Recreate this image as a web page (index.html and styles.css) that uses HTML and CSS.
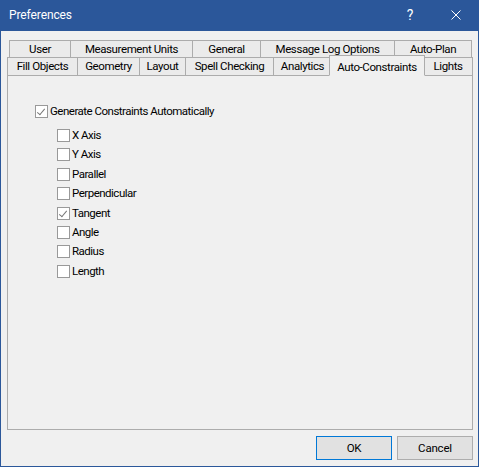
FILE: index.html
```html
<!DOCTYPE html>
<html>
<head>
<meta charset="utf-8">
<link rel="stylesheet" href="styles.css">
</head>
<body>
<div class="window">
  <div class="titlebar">
    <div class="title">Preferences</div>
    <div class="tb-btn help">?</div>
    <div class="tb-btn close">
      <svg width="10" height="10" viewBox="0 0 10 10"><path d="M0.5 0.5 L9.5 9.5 M9.5 0.5 L0.5 9.5" stroke="#fff" stroke-width="1" fill="none"/></svg>
    </div>
  </div>
  <div class="body">
    <div class="tabs">
      <div class="tabrow row1">
        <div class="tab w-user">User</div>
        <div class="tab w-meas">Measurement Units</div>
        <div class="tab w-gen">General</div>
        <div class="tab w-mlo">Message Log Options</div>
        <div class="tab w-ap">Auto-Plan</div>
      </div>
      <div class="tabrow row2">
        <div class="tab w-fill">Fill Objects</div>
        <div class="tab w-geo">Geometry</div>
        <div class="tab w-lay">Layout</div>
        <div class="tab w-spell">Spell Checking</div>
        <div class="tab w-ana">Analytics</div>
        <div class="tab w-ac selected">Auto-Constraints</div>
        <div class="tab w-lights">Lights</div>
      </div>
    </div>
    <div class="panel">
      <label class="cb main"><span class="box checked"></span><span class="lbl">Generate Constraints Automatically</span></label>
      <div class="sub">
        <label class="cb"><span class="box"></span><span class="lbl">X Axis</span></label>
        <label class="cb"><span class="box"></span><span class="lbl">Y Axis</span></label>
        <label class="cb"><span class="box"></span><span class="lbl">Parallel</span></label>
        <label class="cb"><span class="box"></span><span class="lbl">Perpendicular</span></label>
        <label class="cb"><span class="box checked"></span><span class="lbl">Tangent</span></label>
        <label class="cb"><span class="box"></span><span class="lbl">Angle</span></label>
        <label class="cb"><span class="box"></span><span class="lbl">Radius</span></label>
        <label class="cb"><span class="box"></span><span class="lbl">Length</span></label>
      </div>
    </div>
    <div class="buttons">
      <div class="btn default">OK</div>
      <div class="btn">Cancel</div>
    </div>
  </div>
</div>
</body>
</html>
```
FILE: styles.css
```css
* { box-sizing: border-box; }
html, body { margin: 0; padding: 0; }
body {
  width: 479px;
  height: 467px;
  font-family: Roboto, "Noto Sans", sans-serif;
  font-size: 11.5px;
  color: #000;
  overflow: hidden;
}
.window {
  width: 479px;
  height: 467px;
  display: flex;
  flex-direction: column;
  border: 1px solid #2B579A;
  border-top: none;
  background: #F0F0F0;
}
.titlebar {
  height: 31px;
  background: #2B579A;
  display: flex;
  align-items: center;
  color: #fff;
  margin: 0 -1px;
}
.title {
  flex: 1;
  padding-left: 9px;
  font-size: 12px;
  letter-spacing: -0.1px;
  padding-bottom: 1px;
}
.tb-btn {
  width: 46px;
  height: 31px;
  display: flex;
  align-items: center;
  justify-content: center;
}
.help { font-size: 14px; padding-bottom: 1px; }
.close svg { display: block; margin-top: -1px; }
.body {
  flex: 1;
  display: flex;
  flex-direction: column;
  padding: 9px 5px 6px 6px;
}
.tabs { display: flex; flex-direction: column; }
.tabrow { display: flex; }
.row1 { padding-left: 2px; height: 18px; margin-bottom: -1px; }
.row2 { height: 19px; margin-bottom: -1px; position: relative; z-index: 1; }
.tab {
  border: 1px solid #ACACAC;
  background: #EBEBEB;
  margin-right: -1px;
  display: flex;
  align-items: center;
  justify-content: center;
  white-space: nowrap;
  letter-spacing: -0.4px;
  padding-bottom: 1px;
}
.tab.selected {
  background: #F0F0F0;
  border-bottom-color: #F0F0F0;
  margin-top: -2px;
  height: 21px;
  margin-left: -2px;
  margin-right: -2px;
  position: relative;
  z-index: 2;
  padding-top: 3px;
}
.w-user { width: 62px; }
.w-meas { width: 123px; }
.w-gen { width: 69px; }
.w-mlo { width: 135px; }
.w-ap { width: 78px; }
.w-fill { width: 71px; }
.w-geo { width: 63px; }
.w-lay { width: 47px; }
.w-spell { width: 89px; }
.w-ana { width: 59px; }
.w-ac { width: 96px; }
.w-lights { width: 50px; }
.panel {
  flex: 1;
  border: 1px solid #ACACAC;
  background: #F0F0F0;
  padding: 29px 0 0 27px;
}
.cb {
  display: flex;
  align-items: center;
  height: 13px;
}
.main { margin-bottom: 11px; }
.sub { padding-left: 22px; display: flex; flex-direction: column; gap: 6.4px; }
.box {
  width: 13px;
  height: 13px;
  border: 1px solid #999;
  background: #fff;
  flex: none;
  position: relative;
}
.box.checked::after {
  content: "";
  position: absolute;
  left: 3px;
  top: 1px;
  width: 3px;
  height: 7px;
  border: solid #777;
  border-width: 0 1px 1px 0;
  transform: rotate(40deg);
}
.lbl {
  padding-left: 2px;
  letter-spacing: -0.5px;
  white-space: nowrap;
  line-height: 13px;
}
.buttons {
  display: flex;
  justify-content: flex-end;
  gap: 5px;
  padding-top: 6px;
  padding-right: 0;
}
.btn {
  width: 76px;
  height: 24px;
  border: 1px solid #ADADAD;
  background: #E1E1E1;
  display: flex;
  align-items: center;
  justify-content: center;
  letter-spacing: -0.2px;
}
.btn.default { border-color: #0078D7; }
```
